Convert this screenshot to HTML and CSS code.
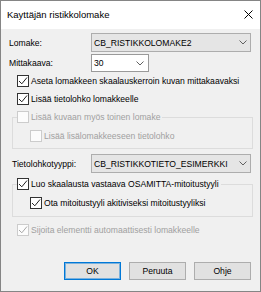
FILE: index.html
```html
<!DOCTYPE html>
<html lang="fi">
<head>
<meta charset="utf-8">
<title>Kayttäjän ristikkolomake</title>
<link rel="stylesheet" href="styles.css">
</head>
<body>
<div class="dialog">
  <div class="titlebar">
    <span class="title">Kayttäjän ristikkolomake</span>
    <svg class="close" width="9" height="9" viewBox="0 0 9 9"><path d="M0.5 0.5 L8.5 8.5 M8.5 0.5 L0.5 8.5" stroke="#000" stroke-width="1" fill="none"/></svg>
  </div>
  <div class="content">
    <div class="field-row row-lomake">
      <span class="lbl">Lomake:</span>
      <div class="combo combo-list wide"><span class="combo-text">CB_RISTIKKOLOMAKE2</span><svg class="chev" width="8" height="5" viewBox="0 0 8 5"><path d="M0.5 0.5 L4 4 L7.5 0.5" stroke="#606060" fill="none"/></svg></div>
    </div>
    <div class="field-row row-mitta">
      <span class="lbl">Mittakaava:</span>
      <div class="combo combo-edit narrow"><span class="combo-text">30</span><svg class="chev" width="8" height="5" viewBox="0 0 8 5"><path d="M0.5 0.5 L4 4 L7.5 0.5" stroke="#606060" fill="none"/></svg></div>
    </div>
    <div class="check-row top-check">
      <span class="cb"><svg width="10" height="10" viewBox="0 0 10 10"><path d="M1 5 L3.8 7.8 L9 1.5" stroke="#222" fill="none"/></svg></span>
      <span class="cb-text">Aseta lomakkeen skaalauskerroin kuvan mittakaavaksi</span>
    </div>
    <div class="check-row top-check">
      <span class="cb"><svg width="10" height="10" viewBox="0 0 10 10"><path d="M1 5 L3.8 7.8 L9 1.5" stroke="#222" fill="none"/></svg></span>
      <span class="cb-text">Lisää tietolohko lomakkeelle</span>
    </div>
    <fieldset class="group group-one">
      <legend class="group-legend">
        <span class="check-row disabled">
          <span class="cb"></span>
          <span class="cb-text">Lisää kuvaan myös toinen lomake</span>
        </span>
      </legend>
      <div class="check-row inner disabled">
        <span class="cb"></span>
        <span class="cb-text">Lisää lisälomakkeeseen tietolohko</span>
      </div>
    </fieldset>
    <div class="field-row row-tieto">
      <span class="lbl lbl-tieto">Tietolohkotyyppi:</span>
      <div class="combo combo-list wide"><span class="combo-text">CB_RISTIKKOTIETO_ESIMERKKI</span><svg class="chev" width="8" height="5" viewBox="0 0 8 5"><path d="M0.5 0.5 L4 4 L7.5 0.5" stroke="#606060" fill="none"/></svg></div>
    </div>
    <fieldset class="group group-two">
      <legend class="group-legend">
        <span class="check-row">
          <span class="cb"><svg width="10" height="10" viewBox="0 0 10 10"><path d="M1 5 L3.8 7.8 L9 1.5" stroke="#222" fill="none"/></svg></span>
          <span class="cb-text">Luo skaalausta vastaava OSAMITTA-mitoitustyyli</span>
        </span>
      </legend>
      <div class="check-row inner">
        <span class="cb"><svg width="10" height="10" viewBox="0 0 10 10"><path d="M1 5 L3.8 7.8 L9 1.5" stroke="#222" fill="none"/></svg></span>
        <span class="cb-text">Ota mitoitustyyli akitiviseksi mitoitustyyliksi</span>
      </div>
    </fieldset>
    <div class="check-row top-check disabled sijoita">
      <span class="cb"><svg width="10" height="10" viewBox="0 0 10 10"><path d="M1 5 L3.8 7.8 L9 1.5" stroke="#a8a8a8" fill="none"/></svg></span>
      <span class="cb-text">Sijoita elementti automaattisesti lomakkeelle</span>
    </div>
  </div>
  <div class="buttons">
    <button class="btn btn-default">OK</button>
    <button class="btn">Peruuta</button>
    <button class="btn">Ohje</button>
  </div>
</div>
</body>
</html>
```
FILE: styles.css
```css
* {
  box-sizing: border-box;
  margin: 0;
  padding: 0;
}

html, body {
  width: 261px;
  height: 292px;
  background: #ffffff;
  overflow: hidden;
}

body {
  font-family: "Liberation Sans", Arial, sans-serif;
  font-size: 8.6px;
  color: #000;
}

.dialog {
  width: 261px;
  height: 292px;
  border: 1px solid #858585;
  background: #f0f0f0;
  display: flex;
  flex-direction: column;
}

.titlebar {
  height: 28px;
  flex: 0 0 28px;
  background: #ffffff;
  display: flex;
  align-items: center;
  justify-content: space-between;
  padding: 0 7px 2px 6px;
}

.title {
  font-size: 9.5px;
  color: #000;
}

.close {
  display: block;
}

.content {
  display: flex;
  flex-direction: column;
  padding: 4px 9px 0 8px;
}

.field-row {
  display: flex;
  align-items: center;
}

.row-lomake {
  height: 19px;
}

.row-mitta {
  height: 18px;
  margin-top: 2px;
}

.row-tieto {
  height: 19px;
  margin-top: 5px;
}

.lbl {
  width: 82px;
  flex: 0 0 82px;
}

.lbl-tieto {
  padding-left: 3px;
}

.combo {
  height: 100%;
  display: flex;
  align-items: center;
  justify-content: space-between;
  padding: 0 3px 0 2px;
  border: 1px solid #adadad;
}

.combo-list {
  background: #e5e5e5;
}

.combo-edit {
  background: #ffffff;
  border-color: #9a9a9a;
  padding-right: 4px;
}

.wide {
  width: 160px;
}

.narrow {
  width: 58px;
}

.chev {
  display: block;
}

.check-row {
  display: flex;
  align-items: center;
  height: 18px;
}

.top-check {
  padding-left: 8px;
}

.cb {
  width: 12px;
  height: 12px;
  flex: 0 0 12px;
  border: 1px solid #333333;
  background: #ffffff;
  display: flex;
  align-items: center;
  justify-content: center;
}

.cb svg {
  display: block;
}

.cb-text {
  margin-left: 2px;
  white-space: nowrap;
}

.disabled .cb {
  border-color: #cccccc;
  background: #fcfcfc;
}

.disabled .cb-text {
  color: #a0a0a0;
}

.group {
  border: 1px solid #dcdcdc;
  margin: 0 -2px 0 3px;
  min-width: 0;
}

.group-one {
  padding: 0 0 3px 0;
}

.group-two {
  margin-top: 2px;
  padding: 0 0 4px 0;
}

.group-legend {
  margin-left: 4px;
  padding: 0 2px 0 0;
}

.group-legend .check-row {
  display: flex;
}

.inner {
  padding-left: 17px;
  margin-top: 1px;
}

.sijoita {
  margin-top: 4px;
}

.buttons {
  margin-top: auto;
  display: flex;
  justify-content: flex-end;
  gap: 8px;
  padding: 0 9px 11px 0;
}

.btn {
  width: 57px;
  height: 18px;
  font-family: "Liberation Sans", Arial, sans-serif;
  font-size: 8.6px;
  color: #000;
  background: #e1e1e1;
  border: 1px solid #adadad;
}

.btn-default {
  border-color: #0078d7;
  box-shadow: inset 0 0 0 1px rgba(0, 120, 215, 0.45);
}
```
